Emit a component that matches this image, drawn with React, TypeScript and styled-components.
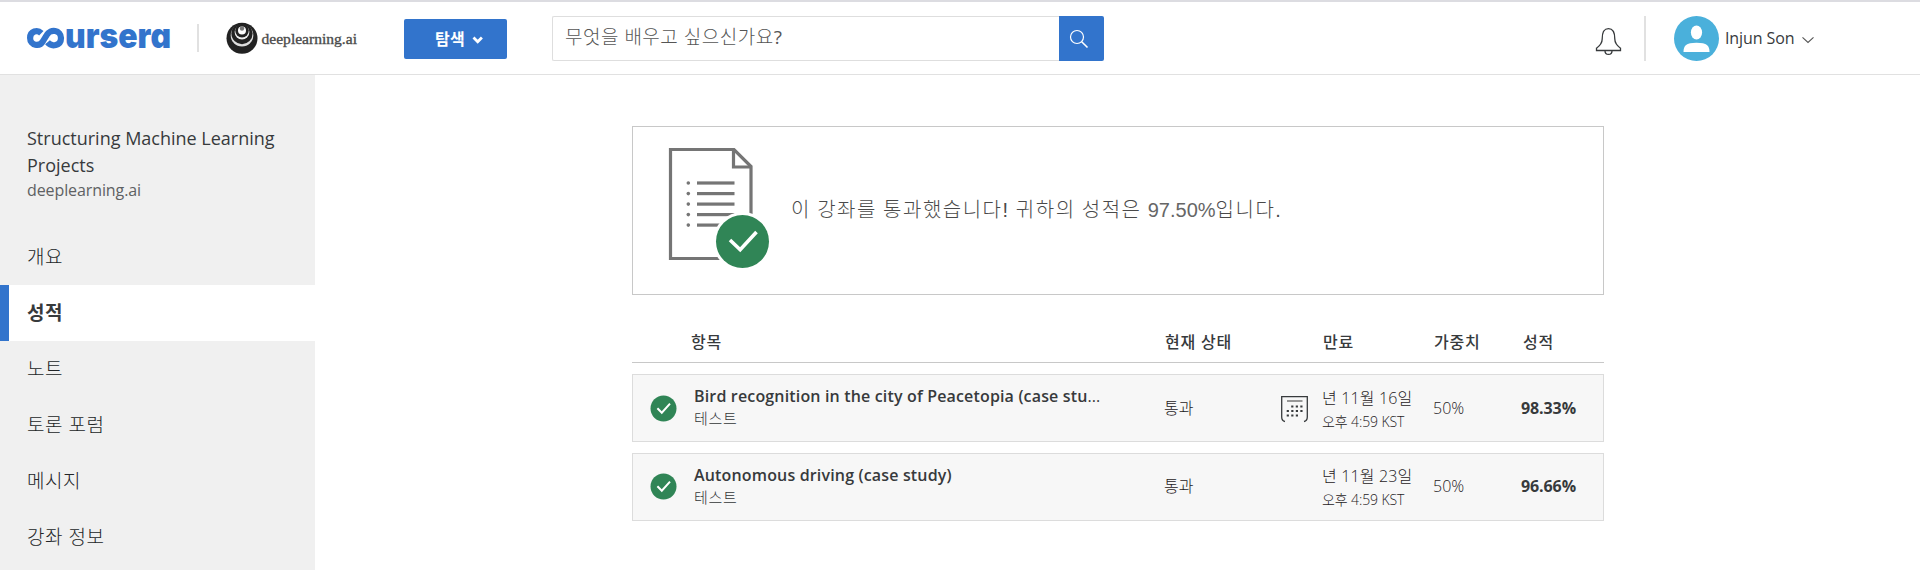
import React from 'react';
import styled, { createGlobalStyle } from 'styled-components';

const GlobalStyle = createGlobalStyle`
  *, *::before, *::after { box-sizing: border-box; }
  body {
    margin: 0;
    background: #fff;
    color: #373a3c;
    font-family: 'Open Sans', 'Noto Sans CJK KR', sans-serif;
    font-size: 16px;
  }
`;

const Page = styled.div`
  height: 570px;
  overflow: hidden;
  display: flex;
  flex-direction: column;
`;

const Header = styled.header`
  flex: none;
  height: 75px;
  border-top: 2px solid #dcdce1;
  border-bottom: 1px solid #e1e1e1;
  display: flex;
  align-items: flex-start;
`;

const CourseraLogo = styled.svg`
  display: block;
  margin: 14px 0 0 20px;
`;

const Divider = styled.span<{ $top: number; $height: number; $left: number }>`
  width: 2px;
  height: ${p => p.$height}px;
  margin: ${p => p.$top}px 0 0 ${p => p.$left}px;
  background: #e1e1e1;
`;

const PartnerLogo = styled.svg`
  display: block;
  margin: 18px 0 0 27px;
`;

const ExploreButton = styled.button`
  margin: 17px 0 0 44px;
  width: 103px;
  height: 40px;
  padding: 0 0 0 31px;
  border: 0;
  border-radius: 2px;
  background: #3274cc;
  color: #fff;
  font: 700 16px/40px 'Open Sans', 'Noto Sans CJK KR', sans-serif;
  letter-spacing: 0.4px;
  display: flex;
  align-items: center;
  gap: 7px;
`;

const Search = styled.form`
  margin: 14px 0 0 45px;
  display: flex;
  height: 45px;
`;

const SearchField = styled.div`
  width: 507px;
  padding-left: 12px;
  border: 1px solid #dedede;
  border-right: 0;
  border-radius: 2px 0 0 2px;
  color: #555;
  font-weight: 300;
  font-size: 19px;
  line-height: 41px;
  letter-spacing: 0.5px;
`;

const QuestionMark = styled.span`
  font-weight: 400;
`;

const SearchButton = styled.button`
  width: 45px;
  padding: 0 5px 0 0;
  border: 0;
  border-radius: 0 2px 2px 0;
  background: #3274cc;
  display: flex;
  align-items: center;
  justify-content: center;
`;

const BellIcon = styled.svg`
  display: block;
  margin: 25px 0 0 491px;
`;

const Account = styled.div`
  margin: 14px 0 0 28px;
  display: flex;
  align-items: center;
`;

const AccountName = styled.span`
  margin: 0 8px 0 6px;
  line-height: 24px;
  padding-bottom: 1px;
  letter-spacing: -0.1px;
`;

const Body = styled.div`
  flex: 1;
  display: flex;
  min-height: 0;
`;

const Sidebar = styled.aside`
  width: 315px;
  background: #f0f0f0;
`;

const CourseInfo = styled.div`
  height: 154px;
  padding: 50px 20px 0 27px;
`;

const CourseTitle = styled.div`
  font-size: 18px;
  line-height: 27px;
`;

const CoursePartner = styled.div`
  color: #5e6163;
  line-height: 22px;
  letter-spacing: -0.1px;
`;

const NavItem = styled.a<{ $active?: boolean }>`
  display: block;
  height: 56px;
  line-height: 56px;
  padding-left: ${p => (p.$active ? 18 : 27)}px;
  border-left: ${p => (p.$active ? '9px solid #3274cc' : '0')};
  background: ${p => (p.$active ? '#fff' : 'transparent')};
  color: ${p => (p.$active ? '#373a3c' : '#222527')};
  font-size: 19px;
  font-weight: ${p => (p.$active ? 700 : 300)};
  letter-spacing: 0.5px;
`;

const Main = styled.main`
  width: 972px;
  margin: 51px 0 0 317px;
`;

const ResultCard = styled.section`
  height: 169px;
  border: 1px solid #c8c8c8;
  display: flex;
  padding: 20px 0 0 35px;
`;

const ResultText = styled.p`
  margin: 48px 0 0 19px;
  color: #4a4a4a;
  font: 300 20px/30px 'Liberation Sans', 'Noto Sans CJK KR', sans-serif;
  letter-spacing: 1.5px;
  word-spacing: -0.8px;
`;

const Score = styled.span`
  color: #666;
  letter-spacing: 0;
`;

const TableHead = styled.div`
  height: 68px;
  padding-top: 35px;
  border-bottom: 1px solid #c8c8c8;
  display: grid;
  grid-template-columns: 59px 474px 115px 43px 111px 89px 1fr;
  font-weight: 500;
  line-height: 24px;
  letter-spacing: 0.8px;
`;

const HeadCell = styled.span<{ $col: number }>`
  grid-column: ${p => p.$col};
`;

const Row = styled.div`
  height: 68px;
  margin-top: 11px;
  border: 1px solid #dcdcdc;
  background: #f7f7f7;
  display: grid;
  grid-template-columns: 61px 470px 117px 41px 111px 88px 1fr;

  &:last-child > :not(:nth-child(2)) {
    margin-top: -1px;
  }
`;

const Status = styled.div`
  padding: 20px 0 0 17px;
`;

const Item = styled.div`
  padding-top: 9px;
`;

const ItemTitle = styled.div`
  font-weight: 600;
  line-height: 24px;
  letter-spacing: 0.16px;
`;

const Ellipsis = styled.span`
  font-weight: 400;
  letter-spacing: 0;
`;

const ItemKind = styled.div`
  font-size: 15px;
  font-weight: 300;
  line-height: 20px;
  letter-spacing: 0.7px;
  color: #333638;
`;

const Value = styled.div<{ $bold?: boolean }>`
  padding-top: 21px;
  line-height: 24px;
  font-weight: ${p => (p.$bold ? 700 : 300)};
  color: ${p => (p.$bold ? '#373a3c' : '#1f2224')};
  letter-spacing: ${p => (p.$bold ? '-0.1px' : '0')};
`;

const CalendarCell = styled.div`
  padding-top: 21px;
`;

const Due = styled.div`
  padding-top: 11px;
  font-weight: 300;
  color: #1f2224;
`;

const DueDate = styled.div`
  line-height: 24px;
  letter-spacing: 0.15px;
`;

const DueTime = styled.div`
  font-size: 14px;
  line-height: 24px;
  letter-spacing: -0.1px;
`;

const nav = ['개요', '성적', '노트', '토론 포럼', '메시지', '강좌 정보'];

const rows = [
  { title: 'Bird recognition in the city of Peacetopia (case stu', cut: true, date: '년 11월 16일', score: '98.33%', calendar: true },
  { title: 'Autonomous driving (case study)', cut: false, date: '년 11월 23일', score: '96.66%', calendar: false },
];

const Icon = styled.svg`
  display: block;
`;

const LogoText = styled.text`
  font-family: Inter, sans-serif;
  font-weight: 900;
  font-size: 34px;
  font-feature-settings: 'cv11';
`;

const PartnerText = styled.text`
  font-family: 'Liberation Serif', serif;
  font-size: 15px;
  stroke: #555;
  stroke-width: 0.35px;
`;

const Check = () => (
  <Icon width="28" height="28" viewBox="0 0 28 28">
    <circle cx="13.5" cy="13.5" r="13" fill="#308556" />
    <path d="M7.4 13.2l4.4 4.5 8.2-9" fill="none" stroke="#fff" strokeWidth="2" />
  </Icon>
);

const Calendar = () => (
  <Icon width="28" height="27" viewBox="0 0 28 27" fill="none" stroke="#373a3c">
    <path d="M4 25.5C1.8 25 .7 24 .7 21V.7h25.6V21c0 3-1.1 4-3.3 4.5" strokeWidth="1.3" />
    <path d="M6 5h15.5" strokeWidth="1.5" stroke="#777" />
    <path d="M10.2 10.5h12M5.7 15h16.5M5.7 19.5h12" strokeWidth="2.2" strokeDasharray="2.2 2.35" />
  </Icon>
);

const dots = [35.4, 46, 56.5, 67, 77.5];

const ReportIcon = () => (
  <svg width="104" height="122" viewBox="0 0 104 122">
    <path d="M2.5 2.5h63.5l17 17v92H2.5z" fill="none" stroke="#757575" strokeWidth="3.2" />
    <path d="M65.5 2.5v17.5h17.5" fill="none" stroke="#757575" strokeWidth="3.2" />
    {dots.map(y => (
      <g key={y} fill="#757575">
        <circle cx="20.3" cy={y + 0.6} r="1.8" />
        <rect x="29" y={y - 1} width="37.5" height="3.2" />
      </g>
    ))}
    <circle cx="74.5" cy="94.5" r="29.5" fill="#fff" />
    <circle cx="74.5" cy="94.5" r="26.5" fill="#308556" />
    <path d="M62 93l10.2 9.7 16.3-17.7" fill="none" stroke="#fff" strokeWidth="3.6" />
  </svg>
);

export default function App() {
  return (
    <Page>
      <GlobalStyle />
      <Header>
        <CourseraLogo width="158" height="48" viewBox="0 -6 158 48" aria-label="coursera">
          <path
            d="M21.300 11.200C17.500 7.400 10.100 9 10.100 16c0 7.600 9.600 9.200 13 3l3.800-6.200C30.200 6.600 41 8 41 16c0 8-9.500 9.200-13.500 4.300"
            fill="none" stroke="#3274cc" strokeWidth="6.2"
          />
          <LogoText x="45" y="25.5" fill="#3274cc" textLength="106" lengthAdjust="spacingAndGlyphs">ursera</LogoText>
        </CourseraLogo>
        <Divider $top={22} $height={28} $left={19} />
        <PartnerLogo width="134" height="36" viewBox="0 0 134 36">
          <circle cx="16" cy="18.3" r="15.5" fill="#222" />
          <circle cx="16" cy="15.2" r="11.3" fill="#ddd" />
          <circle cx="16" cy="13.6" r="10.6" fill="#222" />
          <circle cx="16" cy="12" r="7.4" fill="#eee" />
          <circle cx="16" cy="10.6" r="6.8" fill="#222" />
          <circle cx="16" cy="10.5" r="4" fill="#fff" />
          <circle cx="16" cy="8.5" r="2.2" fill="#777" />
          <PartnerText x="35.5" y="23.5" fill="#444" textLength="95.5" lengthAdjust="spacingAndGlyphs">deeplearning.ai</PartnerText>
        </PartnerLogo>
        <ExploreButton>
          탐색
          <svg width="12" height="9" viewBox="0 0 12 9"><path d="M1.5 2.5l4.2 4.2L9.9 2.5" fill="none" stroke="#fff" strokeWidth="2.8" /></svg>
        </ExploreButton>
        <Search>
          <SearchField>무엇을 배우고 싶으신가요<QuestionMark>?</QuestionMark></SearchField>
          <SearchButton type="button">
            <svg width="20" height="20" viewBox="0 0 20 20" fill="none" stroke="#fff" strokeWidth="1.2">
              <circle cx="8" cy="8" r="6.5" /><path d="M12.7 12.7L18.5 18.5" strokeWidth="1.6" />
            </svg>
          </SearchButton>
        </Search>
        <BellIcon width="27" height="30" viewBox="0 0 27 30" fill="none" stroke="#373a3c" strokeWidth="1.3">
          <path d="M1.5 23.5v-2.3c3-2.2 5.700-4.700 5.700-9.200C7.200 5.500 8.500 1.700 13.500 1.700s6.300 3.800 6.300 10.300c0 4.500 2.700 7 5.700 9.200v2.300z" />
          <path d="M10 23.700c0 5 7 5 7 0" />
        </BellIcon>
        <Divider $top={14} $height={45} $left={22} />
        <Account>
          <svg width="45" height="45" viewBox="0 0 45 45">
            <circle cx="22.5" cy="22.5" r="22.5" fill="#4ab0db" />
            <ellipse cx="22.5" cy="16.5" rx="5.6" ry="7" fill="#fff" />
            <path d="M9.5 36c0-6.300 2.500-9.300 13-9.300s13 3 13 9.300z" fill="#fff" />
          </svg>
          <AccountName>Injun Son</AccountName>
          <svg width="12" height="11" viewBox="0 0 12 11"><path d="M.5 4.3L6 9.500 11.500 4.300" fill="none" stroke="#555" strokeWidth="1.1" /></svg>
        </Account>
      </Header>
      <Body>
        <Sidebar>
          <CourseInfo>
            <CourseTitle>Structuring Machine Learning Projects</CourseTitle>
            <CoursePartner>deeplearning.ai</CoursePartner>
          </CourseInfo>
          {nav.map(label => (
            <NavItem key={label} $active={label === '성적'}>{label}</NavItem>
          ))}
        </Sidebar>
        <Main>
          <ResultCard>
            <ReportIcon />
            <ResultText>
              이 강좌를 통과했습니다! 귀하의 성적은 <Score>97.50%</Score>입니다.
            </ResultText>
          </ResultCard>
          <TableHead>
            <HeadCell $col={2}>항목</HeadCell>
            <HeadCell $col={3}>현재 상태</HeadCell>
            <HeadCell $col={5}>만료</HeadCell>
            <HeadCell $col={6}>가중치</HeadCell>
            <HeadCell $col={7}>성적</HeadCell>
          </TableHead>
          {rows.map(row => (
            <Row key={row.title}>
              <Status><Check /></Status>
              <Item>
                <ItemTitle>{row.title}{row.cut && <Ellipsis>...</Ellipsis>}</ItemTitle>
                <ItemKind>테스트</ItemKind>
              </Item>
              <Value>통과</Value>
              <CalendarCell>{row.calendar && <Calendar />}</CalendarCell>
              <Due>
                <DueDate>{row.date}</DueDate>
                <DueTime>오후 4:59 KST</DueTime>
              </Due>
              <Value>50%</Value>
              <Value $bold>{row.score}</Value>
            </Row>
          ))}
        </Main>
      </Body>
    </Page>
  );
}
